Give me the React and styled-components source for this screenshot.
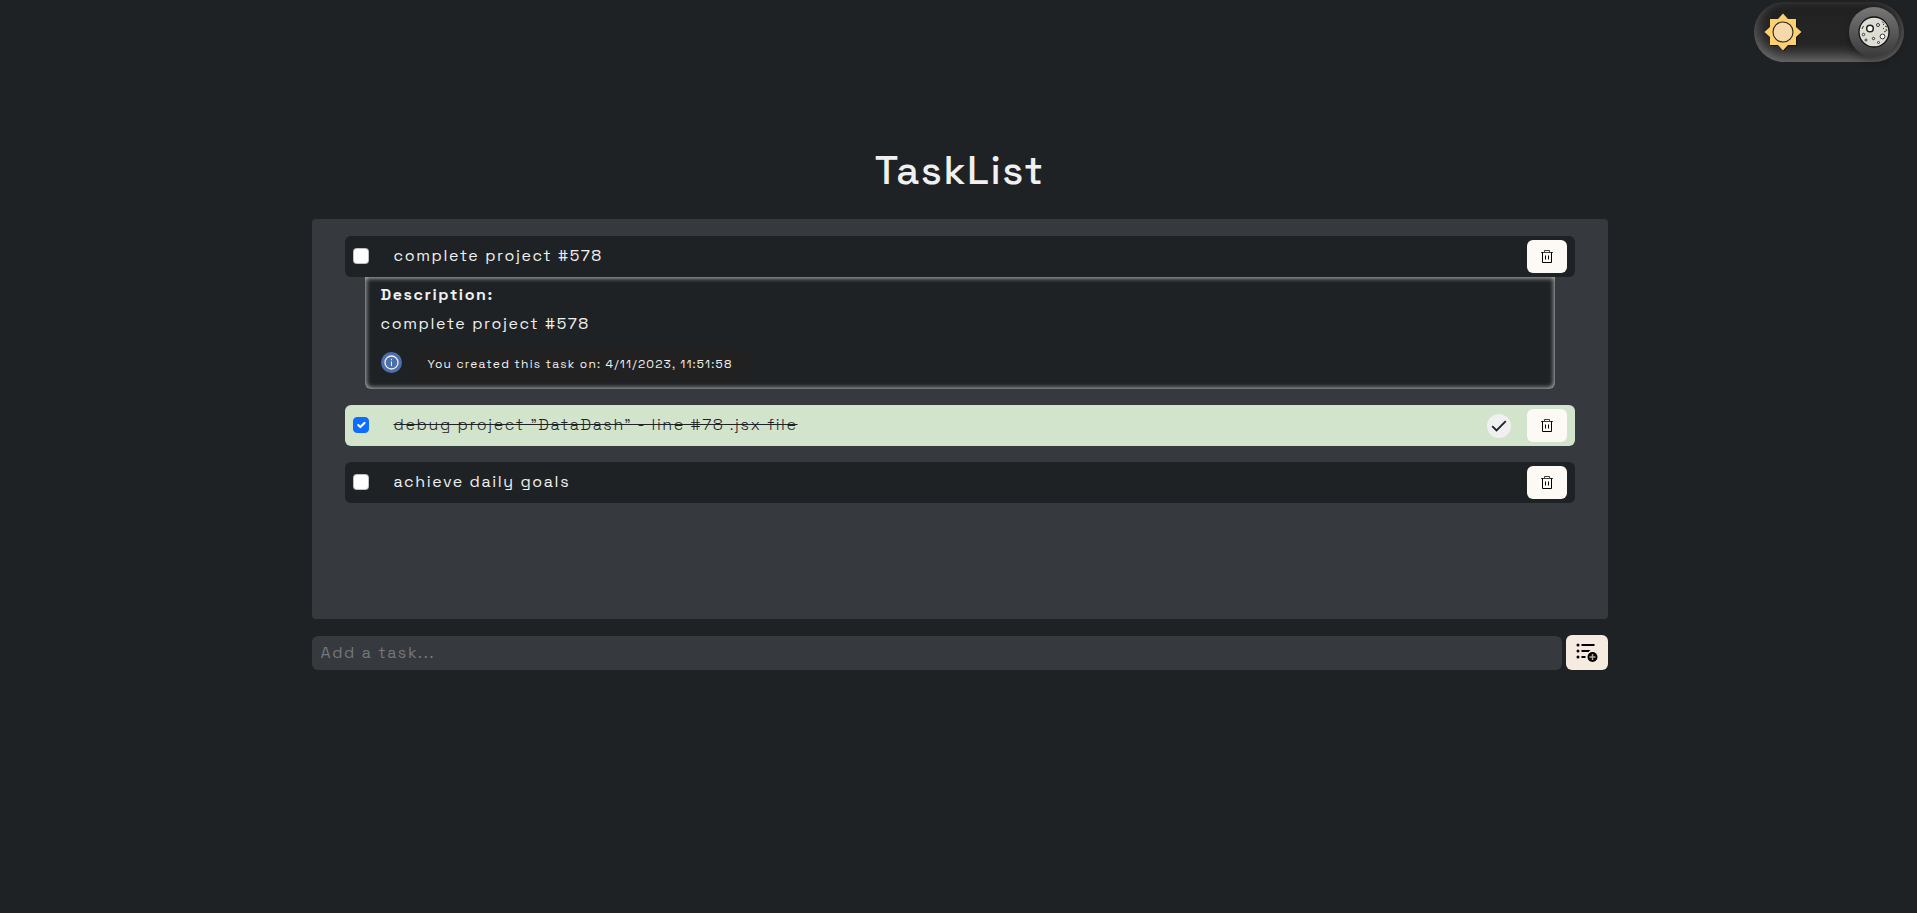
import React from "react";
import styled, { createGlobalStyle } from "styled-components";

const GlobalStyle = createGlobalStyle`
  *, *::before, *::after { box-sizing: border-box; }
  body {
    margin: 0;
    background: #1e2225;
    color: #f0f0f0;
    font-family: "Space Grotesk", Inter, sans-serif;
    font-size: 16px;
    line-height: 24px;
  }
  button, input { font: inherit; color: inherit; }
  h1, p, ul { margin: 0; padding: 0; }
  p, label, input { letter-spacing: 0.1em; }
`;

const Page = styled.div`
  display: flex;
  flex-direction: column;
  min-height: 100vh;
`;

const TopBar = styled.header`
  display: flex;
  justify-content: flex-end;
  padding: 2px 13px 0;
`;

const ThemeSwitch = styled.button`
  display: flex;
  align-items: center;
  justify-content: space-between;
  width: 150px;
  height: 60px;
  padding: 0 5px 0 10px;
  border: 0;
  border-radius: 30px;
  background: #242424;
  box-shadow: inset 0 -5px 15px rgba(255, 255, 255, 0.4), inset 0 5px 15px rgba(0, 0, 0, 0.4);
  cursor: pointer;
`;

const Knob = styled.span`
  display: flex;
  align-items: center;
  justify-content: center;
  width: 50px;
  height: 50px;
  border-radius: 50%;
  background: linear-gradient(180deg, #777, #3a3a3a);
  box-shadow: 0 5px 10px rgba(0, 0, 0, 0.3);
`;

const Main = styled.main`
  width: 100%;
  max-width: 1320px;
  margin: 0 auto;
  padding: 77px 11px 24px 13px;
`;

const Title = styled.h1`
  margin-bottom: 17px;
  font-size: 40px;
  line-height: 63px;
  font-weight: 500;
  text-align: center;
  letter-spacing: 0.04em;
`;

const Panel = styled.ul`
  display: flex;
  flex-direction: column;
  gap: 16px;
  min-height: 400px;
  padding: 17px 33px;
  border-radius: 4px;
  background: #36393e;
  list-style: none;
`;

const Row = styled.div`
  display: flex;
  align-items: center;
  min-height: 41px;
  padding: 4px 8px;
  border-radius: 6px;
  background: ${(p) => (p.$done ? "#d2e4cc" : "#1e2225")};
  color: ${(p) => (p.$done ? "#1e2225" : "#f0f0f0")};
`;

const Checkbox = styled.input`
  appearance: none;
  flex: none;
  width: 16px;
  height: 16px;
  margin: 0 0 1px;
  border: 1px solid rgba(0, 0, 0, 0.25);
  border-radius: 4px;
  background: #fff center / contain no-repeat;
  background-clip: border-box;
  &:checked {
    border-color: #0d6efd;
    background-color: #0d6efd;
    background-image: url("data:image/svg+xml,%3csvg xmlns='http://www.w3.org/2000/svg' viewBox='0 0 20 20'%3e%3cpath fill='none' stroke='%23fff' stroke-linecap='round' stroke-linejoin='round' stroke-width='3' d='m6 10 3 3 6-6'/%3e%3c/svg%3e");
  }
`;

const TaskName = styled.label`
  flex: 1;
  padding: 0 0 2px 25px;
  font-weight: ${(p) => (p.$done ? 300 : 400)};
  text-decoration: ${(p) => (p.$done ? "line-through" : "none")};
`;

const DoneBadge = styled.span`
  display: flex;
  align-items: center;
  justify-content: center;
  width: 24px;
  height: 24px;
  margin-right: 16px;
  border-radius: 50%;
  background: #f0f0f0;
`;

const DeleteButton = styled.button`
  display: flex;
  align-items: center;
  justify-content: center;
  width: 40px;
  height: 33px;
  padding: 0;
  border: 0;
  border-radius: 6px;
  background: #fdf9f4;
  color: #000;
  cursor: pointer;
`;

const Details = styled.section`
  margin: 0 20px;
  padding: 6px 16px 8px;
  border-radius: 0 0 6px 6px;
  background: #1e2225;
  box-shadow: inset 0 0 5px 1px #b9b9b9;
`;

const DetailText = styled.p`
  margin-bottom: 5px;
  font-weight: ${(p) => (p.$strong ? 700 : 400)};
`;

const InfoLine = styled.div`
  display: flex;
  align-items: flex-start;
  gap: 10px;
  margin-top: 12px;
`;

const InfoBadge = styled.span`
  display: flex;
  padding-top: 4px;
`;

const Bubble = styled.p`
  position: relative;
  padding: 4px 16px 5px;
  border-radius: 8px;
  background: #212121;
  font-size: 12px;
  &::before {
    content: "";
    position: absolute;
    top: 12px;
    left: -4px;
    border: 4px solid transparent;
    border-left-width: 0;
    border-right-color: #212121;
  }
`;

const AddForm = styled.form`
  display: flex;
  align-items: flex-end;
  gap: 4px;
  margin-top: 16px;
`;

const TaskInput = styled.input`
  flex: 1;
  min-width: 0;
  height: 34px;
  padding: 0 9px 2px;
  border: 0;
  border-radius: 6px;
  background: #36393e;
  &::placeholder { color: #75777a; opacity: 1; }
`;

const AddButton = styled.button`
  display: flex;
  align-items: center;
  justify-content: center;
  width: 42px;
  height: 35px;
  padding: 0;
  border: 0;
  border-radius: 6px;
  background: #f5ebe0;
  color: #000;
  cursor: pointer;
`;

const Sun = () => (
  <svg width="38" height="38" viewBox="0 0 38 38" aria-hidden="true">
    <path d="M19 .5 24 6h8v8l5.500 5-5.500 5v8h-8l-5 5.500-5-5.500H6v-8L.5 19 6 14V6h8z" fill="#111" transform="translate(.8 .8)" />
    <path d="M19 .5 24 6h8v8l5.500 5-5.500 5v8h-8l-5 5.500-5-5.500H6v-8L.5 19 6 14V6h8z" fill="#ffd070" />
    <circle cx="19" cy="19" r="10" fill="#f6d9ab" stroke="#222" strokeWidth="1.1" />
  </svg>
);

const Moon = () => (
  <svg width="32" height="32" viewBox="0 0 32 32" aria-hidden="true">
    <circle cx="16" cy="16" r="15" fill="#deddd4" stroke="#111" strokeWidth="1.3" />
    <g fill="#f8f8f4" stroke="#222" strokeWidth=".9">
      <circle cx="12" cy="12.500" r="3.300" strokeWidth="1.500" />
      <circle cx="24.500" cy="20.500" r="2.400" />
      <circle cx="20" cy="9" r="1.500" />
      <circle cx="15.500" cy="22.500" r="1.200" />
      <circle cx="5.500" cy="18.500" r="1.200" />
      <circle cx="8" cy="24" r="1" />
      <circle cx="20.500" cy="26.500" r="1" />
      <path d="M4 13l1.500-3M25 8l1 1M27 10l2 1M25 12l1 1M28 13l1 2M26 16l2-1M24 5.500l2 2" fill="none" />
    </g>
  </svg>
);

const Trash = () => (
  <svg width="14" height="15" viewBox="0 0 14 15" fill="none" stroke="currentColor" aria-hidden="true">
    <path d="M4.500 3V1.500h5V3M1 3.500h12" strokeOpacity=".75" />
    <path d="M2.500 3v10.500h9V3M5.500 6.500v4M8.500 6.500v4" />
  </svg>
);

const Check = () => (
  <svg width="16" height="12" viewBox="0 0 16 12" fill="none" stroke="#1e2225" strokeWidth="1.8" aria-hidden="true">
    <path d="M1.200 6.200l4.300 4.300L14.800 1.200" />
  </svg>
);

const Info = () => (
  <svg width="21" height="21" viewBox="0 0 21 21" fill="none" stroke="#f0f0f0" aria-hidden="true">
    <circle cx="10.500" cy="10.500" r="10.500" fill="#4c6fad" stroke="none" />
    <circle cx="10.500" cy="10.500" r="6.500" strokeWidth="1.300" />
    <path d="M10.500 9.500v4.500M10.500 6.800v1.400" />
  </svg>
);

const ListAdd = () => (
  <svg width="22" height="20" viewBox="0 0 22 20" aria-hidden="true">
    <g fill="currentColor">
      <circle cx="2" cy="2" r="1.500" />
      <circle cx="2" cy="8" r="1.500" />
      <circle cx="2" cy="14" r="1.500" />
      <path d="M5.500 1h13v2h-13zM5.500 7h9l-2 2h-7zM5.500 13h4v2h-4z" />
      <circle cx="16.500" cy="14" r="5" />
    </g>
    <path d="M16.500 11v6M13.500 14h6" stroke="#b0a9a1" strokeWidth="1.500" />
  </svg>
);

const tasks = [
  { id: "t1", name: "complete project #578", created: "4/11/2023, 11:51:58", open: true },
  { id: "t2", name: "debug project ”DataDash” - line #78 .jsx file", done: true },
  { id: "t3", name: "achieve daily goals" },
];

const Task = ({ task }) => (
  <li>
    <Row $done={task.done}>
      <Checkbox type="checkbox" id={task.id} defaultChecked={task.done} />
      <TaskName htmlFor={task.id} $done={task.done}>
        {task.name}
      </TaskName>
      {task.done && (
        <DoneBadge>
          <Check />
        </DoneBadge>
      )}
      <DeleteButton type="button" aria-label="Delete task">
        <Trash />
      </DeleteButton>
    </Row>
    {task.open && (
      <Details>
        <DetailText $strong>Description:</DetailText>
        <DetailText>{task.name}</DetailText>
        <InfoLine>
          <InfoBadge>
            <Info />
          </InfoBadge>
          <Bubble>You created this task on: {task.created}</Bubble>
        </InfoLine>
      </Details>
    )}
  </li>
);

export default function App() {
  return (
    <Page>
      <GlobalStyle />
      <TopBar>
        <ThemeSwitch type="button" role="switch" aria-checked="true" aria-label="Dark theme">
          <Sun />
          <Knob>
            <Moon />
          </Knob>
        </ThemeSwitch>
      </TopBar>
      <Main>
        <Title>TaskList</Title>
        <Panel>
          {tasks.map((task) => (
            <Task key={task.id} task={task} />
          ))}
        </Panel>
        <AddForm onSubmit={(e) => e.preventDefault()}>
          <TaskInput type="text" aria-label="Add a task" placeholder="Add a task..." />
          <AddButton type="submit" aria-label="Add task">
            <ListAdd />
          </AddButton>
        </AddForm>
      </Main>
    </Page>
  );
}
